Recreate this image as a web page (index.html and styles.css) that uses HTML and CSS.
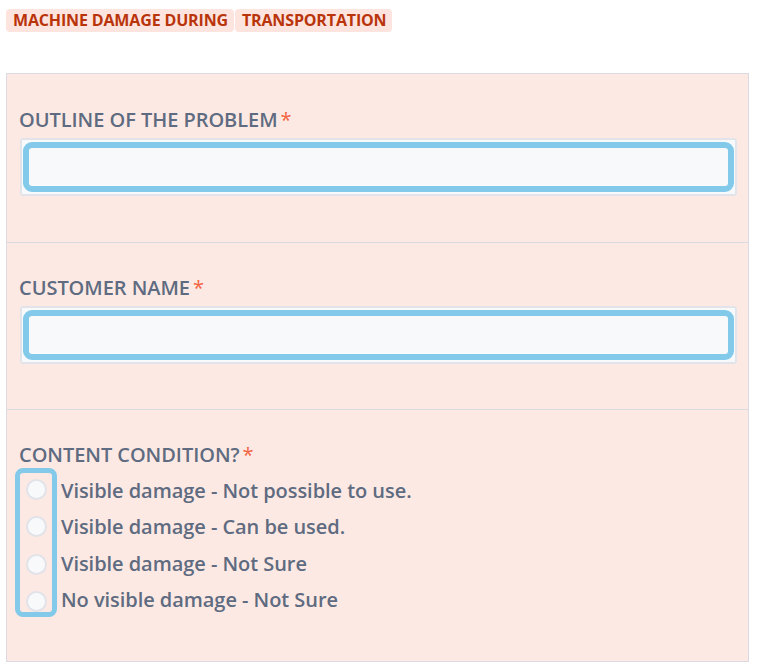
FILE: index.html
```html
<!DOCTYPE html>
<html>
<head>
<meta charset="utf-8">
<link rel="stylesheet" href="styles.css">
</head>
<body>
<div class="tags">
  <span class="tag">MACHINE DAMAGE DURING</span>
  <span class="tag">TRANSPORTATION</span>
</div>
<div class="form">
  <div class="section sec1">
    <div class="label">OUTLINE OF THE PROBLEM<span class="req">*</span></div>
    <div class="field"><div class="input"></div></div>
  </div>
  <div class="section sec2">
    <div class="label">CUSTOMER NAME<span class="req">*</span></div>
    <div class="field"><div class="input"></div></div>
  </div>
  <div class="section sec3">
    <div class="label">CONTENT CONDITION?<span class="req">*</span></div>
    <div class="options">
      <div class="radios">
        <span class="radio"></span>
        <span class="radio"></span>
        <span class="radio"></span>
        <span class="radio"></span>
      </div>
      <div class="texts">
        <div class="opt">Visible damage - Not possible to use.</div>
        <div class="opt">Visible damage - Can be used.</div>
        <div class="opt">Visible damage - Not Sure</div>
        <div class="opt">No visible damage - Not Sure</div>
      </div>
    </div>
  </div>
</div>
</body>
</html>
```
FILE: styles.css
```css
html, body { margin: 0; padding: 0; background: #fff; }
body {
  padding: 9px 6px 0 6px;
  font-family: "Open Sans", "Noto Sans", sans-serif;
  color: #5e6b80;
}
.tags { display: flex; gap: 1px; height: 23px; }
.tag {
  background: #fde4de;
  color: #b9340b;
  font-weight: 700;
  font-size: 16px;
  line-height: 23px;
  padding: 0 6px 0 7px;
  border-radius: 4px;
  letter-spacing: -0.15px;
}
.form {
  margin-top: 41px;
  width: 741px;
  background: #fde9e4;
  border: 1px solid #d9dae2;
}
.section { border-top: 1px solid #d9dae2; padding: 0 12px 0 12px; box-sizing: border-box; }
.section:first-child { border-top: none; }
.sec1 { height: 168px; padding-top: 32px; }
.sec2 { height: 167px; padding-top: 31px; }
.sec3 { height: 252px; padding-top: 31px; }
.label {
  font-size: 20px;
  font-weight: 600;
  line-height: 28px;
  color: #5e6b80;
  letter-spacing: -0.05px;
}
.req { color: #f2633f; margin-left: 3px; font-weight: 400; }
.field {
  margin-top: 4px;
  margin-left: 1px;
  width: 717px;
  box-sizing: border-box;
  border: 2px solid #e2e4ea;
  border-radius: 3px;
  padding: 2px 1px;
  background: #f8f9fb;
}
.input {
  height: 50px;
  box-sizing: border-box;
  border: 6px solid #83c9ea;
  border-radius: 9px;
  background: #f8f9fb;
}
.options { display: flex; align-items: flex-start; margin-top: -1px; }
.radios {
  flex-shrink: 0;
  margin-left: -4px;
  width: 42px;
  box-sizing: border-box;
  border: 5px solid #83c9ea;
  border-radius: 8px;
  padding: 6px 0 0 0;
  display: flex;
  flex-direction: column;
  align-items: center;
  gap: 16.3px;
  height: 149px;
}
.radio {
  flex-shrink: 0;
  width: 21px; height: 21px;
  box-sizing: border-box;
  border-radius: 50%;
  border: 2px solid #e1e3e9;
  background: #f8f9fb;
}
.texts { margin-left: 4px; padding-top: 5px; }
.opt {
  font-size: 20px;
  font-weight: 600;
  line-height: 36.4px;
  color: #5e6b80;
  letter-spacing: -0.05px;
}
```
